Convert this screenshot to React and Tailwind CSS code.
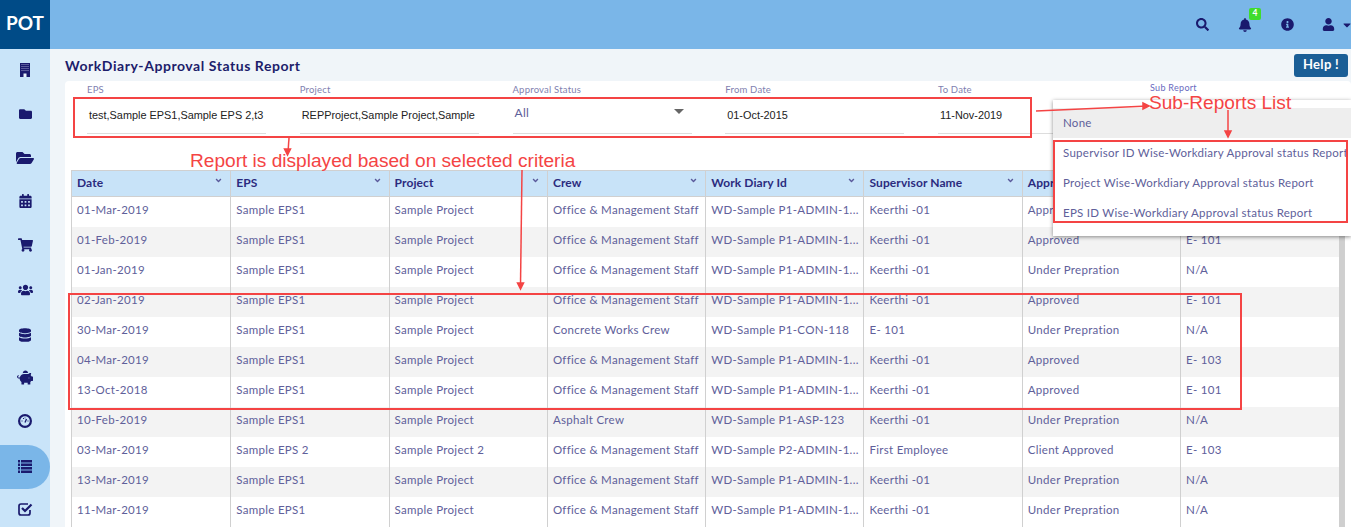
import {
    FaFolder,
    FaFolderOpen,
    FaCalendarAlt,
    FaShoppingCart,
    FaUsers,
    FaDatabase,
    FaPiggyBank,
    FaSearch,
    FaBell,
    FaInfoCircle,
    FaUser,
    FaCaretDown,
    FaAngleDown,
} from 'react-icons/fa';

function BuildingIcon({ className }) {
    return (
        <svg viewBox="0 0 10 14" className={className}>
            <rect width="10" height="14" fill="#1a1a6e" />
            <path d="M1.500 1.500h7M1.500 3.500h7M1.500 5.500h7M1.500 7.500h7" stroke="#9a9ac8" strokeWidth="1" strokeDasharray="1 1" />
            <rect x="3.500" y="10.500" width="3" height="3.500" fill="#e8f2fb" />
        </svg>
    );
}

function GaugeIcon({ className }) {
    return (
        <svg viewBox="0 0 14 14" className={className} fill="none" stroke="#1a1a6e">
            <circle cx="7" cy="7" r="5.900" strokeWidth="2.200" />
            <path d="M7 8.500L8.500 5" strokeWidth="1.300" />
            <path d="M3.500 7h1M5 4.500h1M7 3.500v.8M9.500 7h1" strokeWidth="1" />
        </svg>
    );
}

function ListIcon({ className }) {
    return (
        <svg viewBox="0 0 14 13" className={className} fill="#1a1a6e">
            <path d="M0 0h2v2.500H0zM3 0h11v2.500H3zM0 3.500h2V6H0zM3 3.500h11V6H3zM0 7h2v2.500H0zM3 7h11v2.500H3zM0 10.500h2V13H0zM3 10.500h11V13H3z" />
        </svg>
    );
}

function CheckSquareIcon({ className }) {
    return (
        <svg viewBox="0 0 15 14" className={className} fill="none" stroke="#1a1a6e">
            <path d="M12 8v3a2 2 0 0 1-2 2H3a2 2 0 0 1-2-2V4a2 2 0 0 1 2-2h7" strokeWidth="1.700" />
            <path d="M4 6l3 3 6.500-6.500" strokeWidth="2.200" />
        </svg>
    );
}

const navIcons = [
    [BuildingIcon, 'h-[14px] w-[10px] -translate-y-px'],
    [FaFolder, 'h-[14px] w-[13px] -translate-y-px'],
    [FaFolderOpen, 'h-[16px] w-[18px] -translate-y-px'],
    [FaCalendarAlt, 'h-[14px] w-[13px] -translate-y-[2px]'],
    [FaShoppingCart, 'h-[14px] w-[15px] -translate-y-[2px]'],
    [FaUsers, 'h-[14px] w-[15px] -translate-y-px'],
    [FaDatabase, 'h-[14px] w-[12px]'],
    [FaPiggyBank, 'h-[15px] w-[16px] -translate-y-[2px]'],
    [GaugeIcon, 'h-[14px] w-[14px] -translate-y-[2px]'],
    [ListIcon, 'h-[13px] w-[14px] -translate-y-px'],
    [CheckSquareIcon, 'h-[14px] w-[15px] -translate-y-[2px]'],
];

const columns = ['Date', 'EPS', 'Project', 'Crew', 'Work Diary Id', 'Supervisor Name', 'Approval Status', 'Approved By'];

const office = 'Office & Management Staff';
const admin = 'WD-Sample P1-ADMIN-1...';

const rows = [
    ['01-Mar-2019', 'Sample EPS1', 'Sample Project', office, admin, 'Keerthi -01', 'Approved', 'E- 101'],
    ['01-Feb-2019', 'Sample EPS1', 'Sample Project', office, admin, 'Keerthi -01', 'Approved', 'E- 101'],
    ['01-Jan-2019', 'Sample EPS1', 'Sample Project', office, admin, 'Keerthi -01', 'Under Prepration', 'N/A'],
    ['02-Jan-2019', 'Sample EPS1', 'Sample Project', office, admin, 'Keerthi -01', 'Approved', 'E- 101'],
    ['30-Mar-2019', 'Sample EPS1', 'Sample Project', 'Concrete Works Crew', 'WD-Sample P1-CON-118', 'E- 101', 'Under Prepration', 'N/A'],
    ['04-Mar-2019', 'Sample EPS1', 'Sample Project', office, admin, 'Keerthi -01', 'Approved', 'E- 103'],
    ['13-Oct-2018', 'Sample EPS1', 'Sample Project', office, admin, 'Keerthi -01', 'Approved', 'E- 101'],
    ['10-Feb-2019', 'Sample EPS1', 'Sample Project', 'Asphalt Crew', 'WD-Sample P1-ASP-123', 'Keerthi -01', 'Under Prepration', 'N/A'],
    ['03-Mar-2019', 'Sample EPS 2', 'Sample Project 2', office, 'WD-Sample P2-ADMIN-1...', 'First Employee', 'Client Approved', 'E- 103'],
    ['13-Mar-2019', 'Sample EPS1', 'Sample Project', office, admin, 'Keerthi -01', 'Under Prepration', 'N/A'],
    ['11-Mar-2019', 'Sample EPS1', 'Sample Project', office, admin, 'Keerthi -01', 'Under Prepration', 'N/A'],
];

const subReports = [
    'Supervisor ID Wise-Workdiary Approval status Report',
    'Project Wise-Workdiary Approval status Report',
    'EPS ID Wise-Workdiary Approval status Report',
];

function Field({ label, value }) {
    return (
        <div className="w-[179px] shrink-0">
            <div className="text-[9.5px] leading-[12px] tracking-[0.2px] text-[#7f7fb0]">{label}</div>
            <div className="mt-[7px] h-[31px] border-b border-[#dddddd] pl-[2px] pt-[4px] font-['Liberation_Sans'] text-[10.9px] leading-[16px] whitespace-nowrap overflow-hidden text-[#222]">
                {value}
            </div>
        </div>
    );
}

export default function App() {
    return (
        <div className="relative h-[527px] w-[1351px] overflow-hidden bg-[#f0f5f9] font-['Lato',sans-serif]">
            {/* Header */}
            <div className="flex h-[49px] items-center bg-[#7ab6e8]">
                <div className="flex h-full w-[50px] items-center justify-center bg-[#004b87] pb-[3px] text-[19px] font-bold text-white">POT</div>
                <div className="ml-auto mr-[-2px] flex items-center text-[#1a1a6e]">
                    <FaSearch className="h-[13px] w-[13px]" />
                    <div className="relative ml-[29px]">
                        <FaBell className="h-[14px] w-[14px]" />
                        <span className="absolute -right-[9px] -top-[10px] flex h-[12px] w-[12px] items-center justify-center rounded-[2px] bg-[#3fdc2c] text-[8.500px] font-bold text-white">4</span>
                    </div>
                    <FaInfoCircle className="ml-[29px] h-[13px] w-[13px]" />
                    <FaUser className="ml-[28px] h-[13px] w-[13px]" />
                    <FaCaretDown className="ml-[6px] h-[12px] w-[12px]" />
                </div>
            </div>

            <div className="flex">
                {/* Sidebar */}
                <div className="h-[478px] w-[50px] shrink-0 bg-[#c9e4f9]">
                    {navIcons.map(([Icon, size], i) => (
                        <div key={i} className={`flex h-[44px] items-center justify-center text-[#1a1a6e] ${i === 9 ? 'rounded-r-full bg-[#7ab6e8]' : ''}`}>
                            <Icon className={size} />
                        </div>
                    ))}
                </div>

                {/* Main */}
                <div className="min-w-0 flex-1 pl-[15px]">
                    <div className="flex h-[32px] items-center justify-between pr-[3px]">
                        <h1 className="text-[14px] font-bold tracking-[0.55px] text-[#1d1d6b]">WorkDiary-Approval Status Report</h1>
                        <button className="flex h-[23px] w-[54px] items-center justify-center rounded-[3px] bg-[#1a5e96] text-[13px] font-bold tracking-[0.3px] text-white">Help !</button>
                    </div>

                    <div className="h-[446px] rounded-t-[4px] bg-white pl-[6px]">
                        {/* Filters */}
                        <div className="flex h-[89px] gap-[33.75px] pl-[16px] pt-[3px]">
                            <Field label="EPS" value="test,Sample EPS1,Sample EPS 2,t3" />
                            <Field label="Project" value="REPProject,Sample Project,Sample" />
                            <div className="w-[179px] shrink-0">
                                <div className="text-[9.5px] leading-[12px] tracking-[0.2px] text-[#7f7fb0]">Approval Status</div>
                                <div className="mt-[7px] flex h-[31px] justify-between border-b border-[#dddddd] pl-[2px] pr-[8px] pt-[2px] text-[12px] leading-[16px] tracking-[0.3px] text-[#60609a]">
                                    <span>All</span>
                                    <span className="mt-[4px] h-0 w-0 border-x-[5px] border-t-[5px] border-x-transparent border-t-[#666]"></span>
                                </div>
                            </div>
                            <Field label="From Date" value="01-Oct-2015" />
                            <Field label="To Date" value="11-Nov-2019" />
                        </div>

                        {/* Table */}
                        <div className="w-[1274px] border-x border-b border-[#d0d0d0]">
                            <div className="flex h-[27px] border-y border-[#d0d0d0] bg-[#c8e3f8]">
                                {columns.map((c, i) => (
                                    <div key={c} className={`relative w-[158.3px] shrink-0 pl-[5px] pt-[4px] text-[12px] font-bold leading-[16px] tracking-[0.1px] whitespace-nowrap text-[#2b2b7e] ${i > 0 ? 'border-l border-[#d0d0d0]' : ''}`}>
                                        {c}
                                        <FaAngleDown className="absolute right-[7px] top-[5px] h-[9px] w-[9px] text-[#5a5a9b]" />
                                    </div>
                                ))}
                            </div>
                            <div className="flex">
                                <div className="w-[1267px] shrink-0">
                                    {rows.map((row, r) => (
                                        <div key={r} className={`flex h-[30px] ${r % 2 === 1 ? 'bg-[#f3f3f3]' : 'bg-white'}`}>
                                            {row.map((cell, i) => (
                                                <div key={i} className={`w-[158.3px] shrink-0 pl-[5px] pt-[5px] text-[11.5px] leading-[16px] tracking-[0.3px] whitespace-nowrap text-[#60609a] ${i > 0 ? 'border-l border-[#d0d0d0]' : ''}`}>
                                                    {cell}
                                                </div>
                                            ))}
                                        </div>
                                    ))}
                                </div>
                                <div className="flex-1 bg-[#cfcfcf]"></div>
                            </div>
                        </div>
                    </div>
                </div>
            </div>

            {/* Sub report dropdown */}
            <div className="absolute left-[1150px] top-[82px] text-[9px] leading-[12px] tracking-[0.3px] text-[#6a6ac0]">Sub Report</div>
            <div className="absolute left-[1053px] top-[100px] h-[136px] w-[298px] bg-white pt-[8px] shadow-[0_1px_4px_rgba(0,0,0,0.45)]">
                <div className="flex h-[30px] items-center bg-[#eeeeee] pl-[10px] text-[11.5px] tracking-[0.27px] text-[#60609a]">None</div>
                {subReports.map((s) => (
                    <div key={s} className="flex h-[30px] items-center pl-[10px] text-[11.5px] tracking-[0.27px] whitespace-nowrap text-[#60609a]">{s}</div>
                ))}
            </div>

            {/* Annotations */}
            <div className="absolute left-[73px] top-[97px] h-[41px] w-[959px] border-2 border-[#f44444]"></div>
            <div className="absolute left-[68px] top-[293px] h-[117px] w-[1174px] border-2 border-[#f44444]"></div>
            <div className="absolute left-[1053px] top-[140px] h-[83px] w-[295px] border-2 border-[#f44444]"></div>
            <div className="absolute left-[190px] top-[150px] font-['Liberation_Sans'] text-[19.1px] leading-[22px] whitespace-nowrap text-[#f44444]">Report is displayed based on selected criteria</div>
            <div className="absolute left-[1149px] top-[92px] font-['Liberation_Sans'] text-[19.1px] leading-[22px] whitespace-nowrap text-[#f44444]">Sub-Reports List</div>
            <svg className="absolute left-0 top-0" width="1351" height="527" fill="none" stroke="#f44444" strokeWidth="1.5">
                <path d="M1036 111L1148 106" />
                <path d="M1149 106l-6-3v6z" fill="#f44444" />
                <path d="M1228 110V134" />
                <path d="M1228 137l-3-6h6z" fill="#f44444" />
                <path d="M289 138L288 152" />
                <path d="M287.500 155l-3-6h6z" fill="#f44444" />
                <path d="M522 170L520.500 285" />
                <path d="M520.500 289l-3-6h6z" fill="#f44444" />
            </svg>
        </div>
    );
}
